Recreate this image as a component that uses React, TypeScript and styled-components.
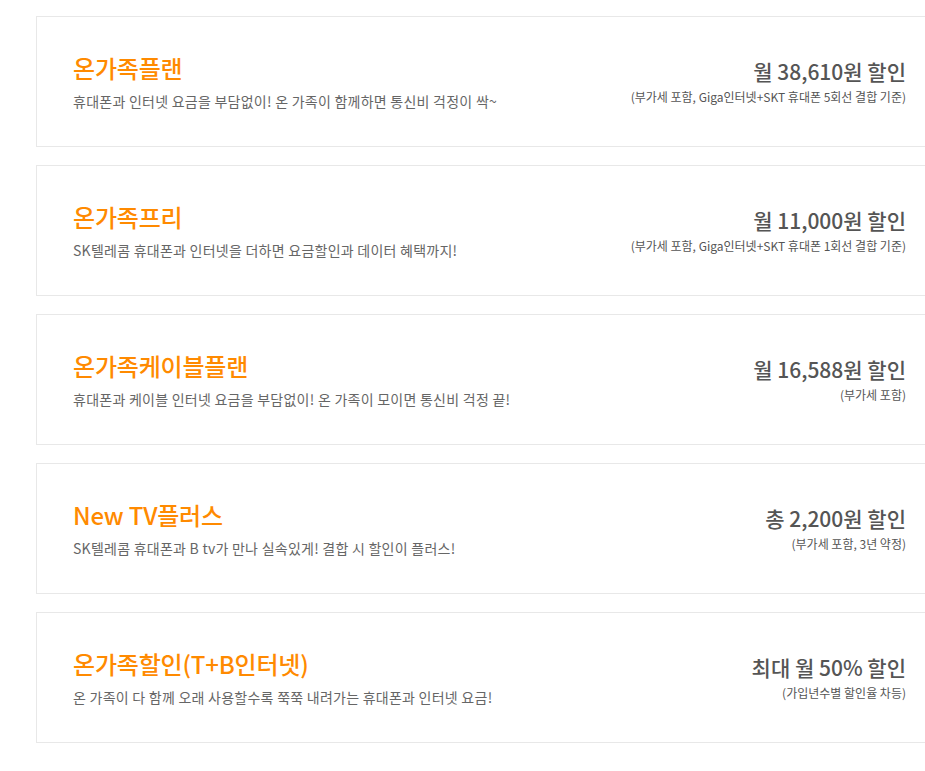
import React from 'react';
import styled, { createGlobalStyle } from 'styled-components';

const GlobalStyle = createGlobalStyle`
  html, body {
    margin: 0;
    padding: 0;
    background: #fff;
    overflow-x: hidden;
  }
  body {
    font-family: 'Noto Sans CJK KR', 'Noto Sans', sans-serif;
  }
`;

const Page = styled.div`
  display: flex;
  flex-direction: column;
  gap: 18px;
  padding: 16px 0 30px 36px;
  width: 944px;
  box-sizing: border-box;
`;

const Card = styled.div`
  display: flex;
  align-items: center;
  justify-content: space-between;
  box-sizing: border-box;
  height: 131px;
  padding: 0 37px 4px 36px;
  border: 1px solid #e8e8e8;
  background: #fff;
`;

const Info = styled.div`
  display: flex;
  flex-direction: column;
  padding-top: 4px;
`;

const Title = styled.h2`
  margin: 0;
  font-size: 24px;
  font-weight: 500;
  color: #ff8a00;
  line-height: 30px;
  letter-spacing: -0.2px;
`;

const Desc = styled.p`
  margin: 8px 0 0;
  font-size: 14px;
  color: #666;
  line-height: 20px;
  letter-spacing: 0.25px;
`;

const Price = styled.div`
  display: flex;
  flex-direction: column;
  align-items: flex-end;
  padding-top: 4px;
`;

const Amount = styled.div`
  font-size: 21px;
  font-weight: 500;
  color: #555;
  line-height: 26px;
`;

const Note = styled.div`
  margin-top: 5px;
  font-size: 12px;
  color: #555;
  line-height: 16px;
`;

type Plan = {
  title: string;
  desc: string;
  amount: string;
  note: string;
};

const plans: Plan[] = [
  {
    title: '온가족플랜',
    desc: '휴대폰과 인터넷 요금을 부담없이! 온 가족이 함께하면 통신비 걱정이 싹~',
    amount: '월 38,610원 할인',
    note: '(부가세 포함, Giga인터넷+SKT 휴대폰 5회선 결합 기준)',
  },
  {
    title: '온가족프리',
    desc: 'SK텔레콤 휴대폰과 인터넷을 더하면 요금할인과 데이터 혜택까지!',
    amount: '월 11,000원 할인',
    note: '(부가세 포함, Giga인터넷+SKT 휴대폰 1회선 결합 기준)',
  },
  {
    title: '온가족케이블플랜',
    desc: '휴대폰과 케이블 인터넷 요금을 부담없이! 온 가족이 모이면 통신비 걱정 끝!',
    amount: '월 16,588원 할인',
    note: '(부가세 포함)',
  },
  {
    title: 'New TV플러스',
    desc: 'SK텔레콤 휴대폰과 B tv가 만나 실속있게! 결합 시 할인이 플러스!',
    amount: '총 2,200원 할인',
    note: '(부가세 포함, 3년 약정)',
  },
  {
    title: '온가족할인(T+B인터넷)',
    desc: '온 가족이 다 함께 오래 사용할수록 쭉쭉 내려가는 휴대폰과 인터넷 요금!',
    amount: '최대 월 50% 할인',
    note: '(가입년수별 할인율 차등)',
  },
];

export default function App() {
  return (
    <>
      <GlobalStyle />
      <Page>
        {plans.map(p => (
          <Card key={p.title}>
            <Info>
              <Title>{p.title}</Title>
              <Desc>{p.desc}</Desc>
            </Info>
            <Price>
              <Amount>{p.amount}</Amount>
              <Note>{p.note}</Note>
            </Price>
          </Card>
        ))}
      </Page>
    </>
  );
}
